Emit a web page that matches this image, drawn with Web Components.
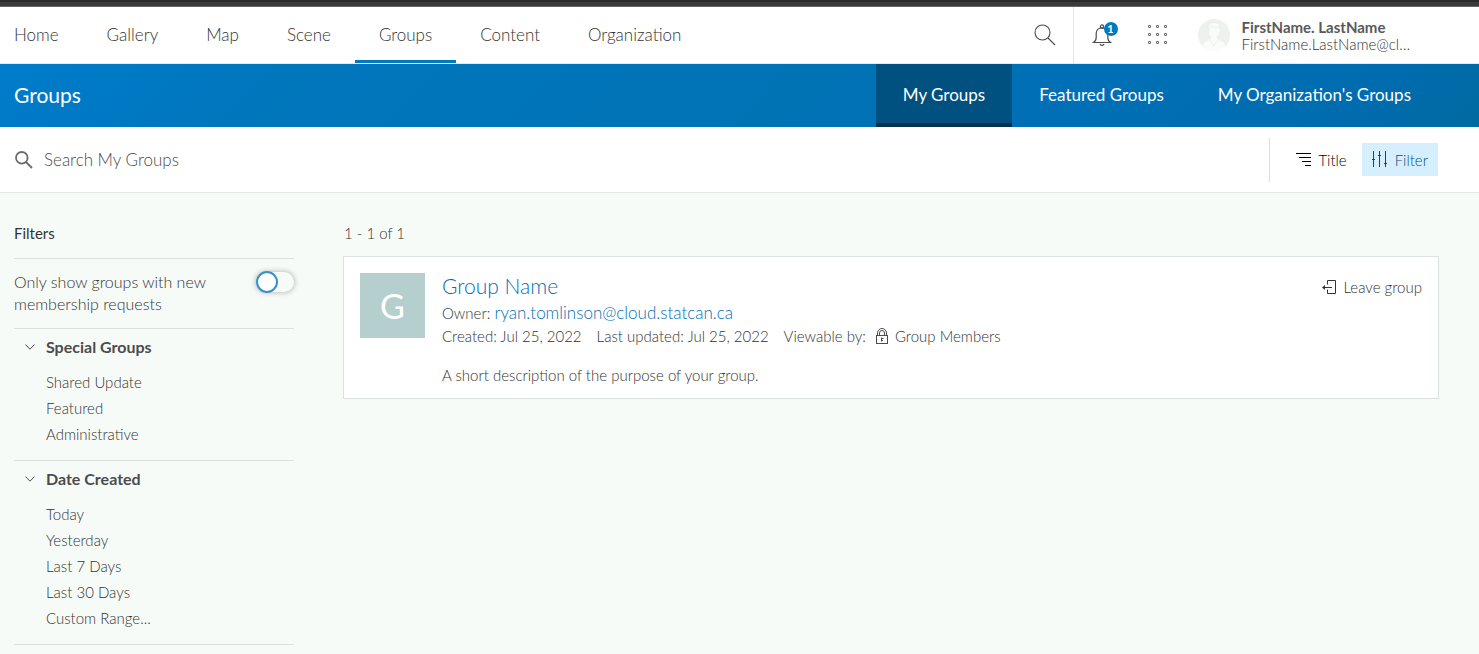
<!DOCTYPE html>
<html lang="en">
<head>
<meta charset="utf-8">
<title>Groups</title>
<style>
  html { background: #f7fbf8; }
  body { margin: 0; font-family: Lato, "Open Sans", sans-serif; font-size: 15px; line-height: 22px; font-weight: 300; color: #333; --blue: #0079c1; --link: #006fb5; --line: #dbe1dc; }
</style>
</head>
<body>
<groups-app></groups-app>
<script>
const icons = {
  search: '<svg width="22" height="22" viewBox="0 0 22 22" fill="none" stroke="#4c4c4c" stroke-width="1.1"><circle cx="8.5" cy="8.5" r="7.5"/><path d="M14 14l7 7"/></svg>',
  searchBold: '<svg width="18" height="18" viewBox="0 0 18 18" fill="none" stroke="currentColor" stroke-width="1.8"><circle cx="6.8" cy="6.8" r="5.8"/><path d="M11 11l6 6"/></svg>',
  bell: '<svg width="20" height="22" viewBox="0 0 20 22" fill="none" stroke="#4c4c4c" stroke-width="1.2"><circle cx="10" cy="2.5" r="1.6"/><path d="M1.500 18.500h17c-2-1.200-2.700-2.500-2.700-5V9.500c0-3.400-2.300-5.700-5.800-5.700S4.200 6.100 4.200 9.500v4c0 2.500-.7 3.800-2.700 5zM8 20c.3 1 1 1.400 2 1.400s1.700-.4 2-1.400"/></svg>',
  grid: '<svg width="20" height="20" viewBox="0 0 20 20" fill="none" stroke="#4c4c4c" stroke-width="1"><g id="r"><rect x=".5" y=".5" width="2" height="2" rx=".6"/><rect x="8.500" y=".5" width="2" height="2" rx=".6"/><rect x="16.500" y=".5" width="2" height="2" rx=".6"/></g><use href="#r" y="8"/><use href="#r" y="16"/></svg>',
  avatar: '<svg width="32" height="32" viewBox="0 0 32 32"><circle cx="16" cy="16" r="16" fill="#edf2ef"/><path d="M11 10c-1-4 2-6 5-6s6 1 6 5l-1 5c-.6 2-1.600 3.500-2.500 4v2l7 3c1 1 1.500 4 1.500 5a16 16 0 0 1-22 0c0-2 .6-4 2-5l6-3v-2c-1.500-1-2-4-2-8z" fill="#fafcfb"/><path d="M10 10c-.5-4 2-6.500 6-6.500 4 0 6.500 2 6 6.500l-1.500-2c-3 .5-6-.2-7.500-1.500L11 11zM12 21l4 6 4-6" fill="none" stroke="#e8eeeb" stroke-width=".8"/></svg>',
  sort: '<svg width="15" height="14" viewBox="0 0 15 14" fill="none" stroke="currentColor" stroke-width="1"><path d="M0 .5h15M3 4.500h12M6 8.500h9M9 12.500h6"/></svg>',
  filter: '<svg width="16" height="17" viewBox="0 0 16 17" fill="none" stroke="currentColor" stroke-width="1"><path d="M1.500 0v16M7.500 0v16M13.500 0v16"/><path d="M0 8.500h3M6 4.500h3M12 12.500h3"/></svg>',
  chevron: '<svg width="10" height="6" viewBox="0 0 10 6" fill="none" stroke="currentColor" stroke-width="1"><path d="M.5.500L5 5.200 9.500.500"/></svg>',
  leave: '<svg width="14" height="14" viewBox="0 0 14 14" fill="none" stroke="currentColor" stroke-width="1"><path d="M5.500 4.500v-4h8v13h-8v-4M.8 7.500H10"/><path d="M3 5L0 7.500 3 10z" fill="currentColor" stroke="none"/></svg>',
  lock: '<svg width="12" height="16" viewBox="0 0 12 16" fill="none" stroke="#4c4c4c" stroke-width="1"><rect x=".5" y="7.500" width="11" height="8"/><path d="M1.500 7V5a4.500 4.500 0 0 1 9 0v2M3.500 7V5a2.500 2.500 0 0 1 5 0v2M5.500 9.500v4M5.500 10.500h2M5.500 12.500h1.500"/></svg>'
};

const base = `
  *, *::before { box-sizing: border-box; }
  :host { display: block; }
  :host([hidden]) { display: none; }
  a { color: inherit; text-decoration: none; }
  svg { display: block; flex: none; }
  button { font: inherit; color: inherit; background: none; border: 0; padding: 0; cursor: pointer; }
  h1, h2, h3, p, ul { margin: 0; padding: 0; font-weight: inherit; font-size: inherit; }
  ul { list-style: none; }
`;

function define(name, css, html) {
  customElements.define(name, class extends HTMLElement {
    constructor() {
      super();
      const markup = typeof html === 'function' ? html(this) : html;
      this.attachShadow({ mode: 'open' }).innerHTML = `<style>${base}${css}</style>${markup}`;
    }
  });
}

define('ui-icon', ':host { flex: none; }', el => icons[el.getAttribute('name')]);

define('nav-link', `
  :host { flex: none; }
  a { display: block; height: 56px; padding: 16px 24px 0; font-size: 17px; line-height: 24px; border-bottom: 3px solid transparent; }
  :host([current]) a { border-color: var(--blue); }
`, '<a href="#"><slot></slot></a>');

define('user-menu', `
  button { display: flex; align-items: center; gap: 12px; text-align: left; height: 54px; }
  strong, span span { display: block; }
  strong { font-size: 15px; line-height: 18px; font-weight: 700; color: #595959; }
  span span { font-size: 15px; line-height: 17px; }
`, `<button type="button"><ui-icon name="avatar"></ui-icon><span><strong><slot name="name"></slot></strong><span><slot name="email"></slot></span></span></button>`);

define('site-header', `
  :host { background: #fff; border-bottom: 1px solid #e2e8e8; }
  .strip { height: 7px; background: linear-gradient(#292929 2px, #393939 2px 6px, #666 6px); }
  header { display: flex; justify-content: space-between; height: 56px; padding-right: 69px; }
  nav { display: flex; margin-left: -10px; }
  .tools { display: flex; align-items: center; }
  .search { padding: 0 17px 0 0; height: 56px; border-right: 1px solid #e2e5e3; }
  .bell { position: relative; margin-left: 18px; }
  .badge { position: absolute; left: 12px; top: -2px; width: 14px; height: 14px; border-radius: 50%; background: var(--blue); color: #fff; font-size: 11px; line-height: 14px; font-weight: 700; text-align: center; }
  .apps { margin: 0 30px 0 36px; }
`, `<div class="strip"></div><header>
  <nav aria-label="Site"><slot></slot></nav>
  <div class="tools">
    <button class="search" type="button" aria-label="Search"><ui-icon name="search"></ui-icon></button>
    <button class="bell" type="button" aria-label="Notifications"><ui-icon name="bell"></ui-icon><span class="badge">1</span></button>
    <button class="apps" type="button" aria-label="Apps"><ui-icon name="grid"></ui-icon></button>
    <slot name="user"></slot>
  </div>
</header>`);

define('banner-tab', `
  a { display: block; height: 63px; padding: 20px 27px 0; line-height: 22px; font-size: 17px; font-weight: 400; border-bottom: 4px solid transparent; }
  :host([current]) a { background: #005080; border-color: #00304d; }
`, '<a href="#"><slot></slot></a>');

define('page-banner', `
  :host { color: #fff; background: linear-gradient(137deg, #007ccb 0%, #0076bc 20%, #0073b5 55%, #006fb5 70%, #006cb0 90%, #006aa0 100%); }
  div { display: flex; justify-content: space-between; padding: 0 41px 0 14px; }
  h1 { font-size: 21px; line-height: 28px; padding-top: 17px; font-weight: 400; }
  nav { display: flex; }
`, '<div><h1><slot name="title"></slot></h1><nav aria-label="Groups"><slot></slot></nav></div>');

define('tool-button', `
  button { display: flex; align-items: center; gap: 7px; height: 33px; padding: 0 10px; color: #000; font-size: 15px; }
  :host([active]) button { background: #d6efff; color: #004f7e; }
`, el => `<button type="button"><ui-icon name="${el.getAttribute('icon')}"></ui-icon><slot></slot></button>`);

define('search-bar', `
  :host { background: #fff; border-bottom: 1px solid #e2e8e4; }
  form { display: flex; align-items: center; height: 65px; padding: 0 41px 0 15px; }
  label { display: flex; align-items: center; gap: 11px; flex: 1; color: #6a6a6a; }
  input { flex: 1; min-width: 0; border: 0; padding: 0; outline: 0; background: none; font: inherit; font-size: 17px; line-height: 24px; height: 24px; color: #4c4c4c; }
  input::placeholder { color: #4c4c4c; opacity: 1; }
  .actions { display: flex; align-items: center; gap: 5px; height: 44px; padding-left: 16px; border-left: 1px solid #dfdfdf; }
`, `<form><label><ui-icon name="searchBold"></ui-icon><input type="text" placeholder="Search My Groups" aria-label="Search My Groups"></label><div class="actions"><slot></slot></div></form>`);

define('toggle-row', `
  :host { border-top: 1px solid var(--line); }
  label { display: flex; justify-content: space-between; align-items: flex-start; padding: 12px 0 13px; }
  .text { max-width: 204px; font-size: 16px; }
  input { appearance: none; flex: none; position: relative; width: 38px; height: 20px; margin: 1px 0 0; border-radius: 10px; background: #f7fbf8; box-shadow: 0 0 5px 1px #bcc0be; }
  input::before { content: ""; position: absolute; left: 0; top: -1px; width: 22px; height: 22px; border: 2px solid #3890c8; border-radius: 50%; background: #fff; }
`, '<label><span class="text"><slot></slot></span><input type="checkbox" role="switch"></label>');

define('filter-group', `
  :host { border-top: 1px solid var(--line); padding: 7px 0 13px; }
  button { display: flex; align-items: center; gap: 11px; padding-left: 11px; font-size: 16px; font-weight: 700; line-height: 22px; color: #4c4c4c; }
  ul { margin: 11px 0 0 32px; line-height: 26px; }
`, el => `<h3><button type="button" aria-expanded="true"><ui-icon name="chevron"></ui-icon>${el.getAttribute('heading')}</button></h3>
  <ul>${el.getAttribute('options').split('|').map(o => `<li><a href="#">${o}</a></li>`).join('')}</ul>`);

define('filter-panel', `
  :host { border-bottom: 1px solid var(--line); }
  h2 { font-size: 15px; line-height: 22px; padding: 3px 0 14px; font-weight: 400; }
`, '<aside><h2>Filters</h2><slot></slot></aside>');

define('group-card', `
  :host { background: #fff; border: 1px solid var(--line); }
  article { display: flex; padding: 16px 16px 12px; }
  .thumb { flex: none; width: 65px; height: 65px; margin-right: 17px; background: #b5cfcf; color: #fff; font-size: 34px; line-height: 66px; text-align: center; font-weight: 400; }
  .body { flex: 1; min-width: 0; }
  h2 { color: var(--link); font-size: 21px; line-height: 26px; }
  .owner { margin-top: 2px; line-height: 24px; }
  .owner a { color: var(--link); font-size: 17px; }
  .meta { display: flex; gap: 15px; }
  .meta li { display: flex; align-items: center; }
  .meta ui-icon { margin: 0 7px 0 10px; }
  .about { margin-top: 17px; }
  .leave { display: flex; align-items: center; gap: 8px; height: 22px; margin-top: 3px; }
`, `<article>
  <div class="thumb" aria-hidden="true">G</div>
  <div class="body">
    <h2><a href="#"><slot name="title"></slot></a></h2>
    <p class="owner">Owner: <a href="#"><slot name="owner"></slot></a></p>
    <ul class="meta"><li><slot name="created"></slot></li><li><slot name="updated"></slot></li><li>Viewable by:<ui-icon name="lock"></ui-icon><slot name="access"></slot></li></ul>
    <p class="about"><slot name="about"></slot></p>
  </div>
  <button class="leave" type="button"><ui-icon name="leave"></ui-icon>Leave group</button>
</article>`);

define('groups-app', `
  .page { display: grid; grid-template-columns: 280px minmax(0, 1fr); column-gap: 49px; align-items: start; padding: 26px 40px 0 14px; }
  .count { padding: 3px 0 12px 1px; }
`, `<site-header>
  <nav-link>Home</nav-link><nav-link>Gallery</nav-link><nav-link>Map</nav-link><nav-link>Scene</nav-link><nav-link current>Groups</nav-link><nav-link>Content</nav-link><nav-link>Organization</nav-link>
  <user-menu slot="user"><span slot="name">FirstName. LastName</span><span slot="email">FirstName.LastName@cl…</span></user-menu>
</site-header>
<page-banner><span slot="title">Groups</span><banner-tab current>My Groups</banner-tab><banner-tab>Featured Groups</banner-tab><banner-tab>My Organization's Groups</banner-tab></page-banner>
<search-bar><tool-button icon="sort">Title</tool-button><tool-button icon="filter" active>Filter</tool-button></search-bar>
<div class="page">
  <filter-panel>
    <toggle-row>Only show groups with new membership requests</toggle-row>
    <filter-group heading="Special Groups" options="Shared Update|Featured|Administrative"></filter-group>
    <filter-group heading="Date Created" options="Today|Yesterday|Last 7 Days|Last 30 Days|Custom Range..."></filter-group>
  </filter-panel>
  <main>
    <p class="count">1 - 1 of 1</p>
    <group-card>
      <span slot="title">Group Name</span>
      <span slot="owner">ryan.tomlinson@cloud.statcan.ca</span>
      <span slot="created">Created: Jul 25, 2022</span>
      <span slot="updated">Last updated: Jul 25, 2022</span>
      <span slot="access">Group Members</span>
      <span slot="about">A short description of the purpose of your group.</span>
    </group-card>
  </main>
</div>`);
</script>
</body>
</html>
